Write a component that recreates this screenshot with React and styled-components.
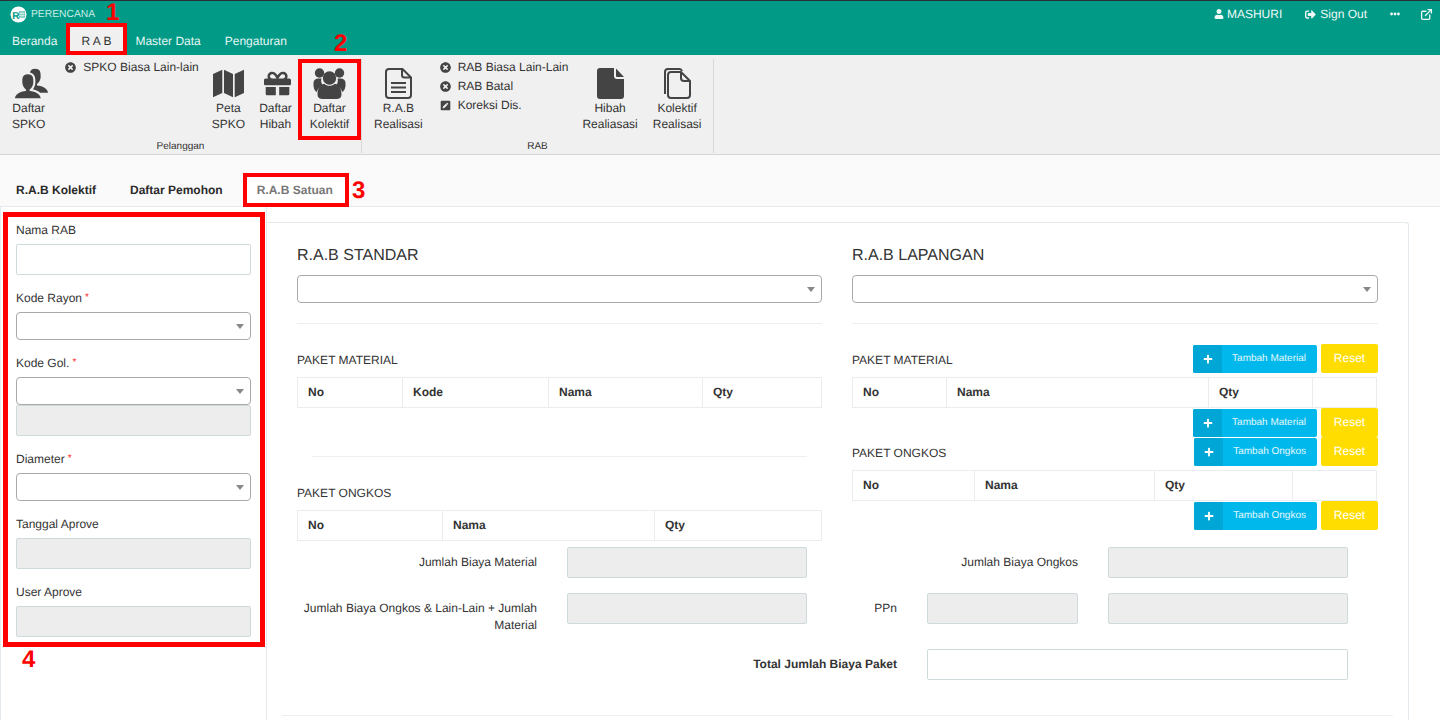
import React from 'react';
import styled, { createGlobalStyle } from 'styled-components';
import { FaUser, FaSignOutAlt, FaEllipsisH, FaTimesCircle, FaPenSquare, FaGift, FaPlus } from 'react-icons/fa';
import { ImUsers } from 'react-icons/im';
import { FiExternalLink } from 'react-icons/fi';

const Global = createGlobalStyle`
  html, body { margin: 0; padding: 0; background: #fff; overflow: hidden; }
  body { font-family: "Liberation Sans", Arial, sans-serif; font-size: 12px; line-height: 17px; color: #333; text-rendering: geometricPrecision; }
  * { box-sizing: border-box; }
`;

const Page = styled.div`position: relative; width: 1440px; height: 720px; overflow: hidden;`;

const Header = styled.header`
  height: 55px; background: #009a87; border-top: 1px solid #263238; color: #fff;
  display: flex; flex-direction: column;
`;
const TopRow = styled.div`height: 26px; display: flex; align-items: center; padding: 0 7px 0 10px;`;
const Brand = styled.div`display: flex; align-items: center; gap: 4px; font-size: 10.3px; color: #c9ece6;`;
const TopRight = styled.div`margin-left: auto; display: flex; align-items: center; gap: 23px;`;
const TopItem = styled.span`display: inline-flex; align-items: center; gap: ${p => p.$gap ?? 4}px; font-size: 12px; color: #eef9f7; margin-left: ${p => p.$ml ?? 0}px;`;
const NavRow = styled.nav`height: 28px; display: flex;`;
const NavTab = styled.a`
  padding: 0 12px; display: flex; align-items: center; font-size: 12px; height: 28px;
  color: ${p => (p.$active ? '#333' : '#e6f6f3')};
  background: ${p => (p.$active ? '#f0f0f0' : 'transparent')};
`;

const Ribbon = styled.section`height: 100px; background: #f0f0f0; border-bottom: 1px solid #d2d6d8; display: flex; padding-top: 4px;`;
const Group = styled.div`
  width: ${p => p.$w}px; height: 94px; border-right: 1px solid #d6d9da; padding-left: 5px;
  display: flex; flex-direction: column; flex: none;
`;
const GroupBody = styled.div`display: flex; height: 82px;`;
const GroupLabel = styled.div`font-size: 10px; line-height: 12px; text-align: center; color: #333; margin-left: -5px;`;
const BigButton = styled.div`
  padding: 7px 7px 0; display: flex; flex-direction: column; align-items: center;
  text-align: center; line-height: 16px; color: #333; white-space: nowrap; margin-right: ${p => p.$mr ?? 0}px;
`;
const IconBox = styled.div`height: 34px; display: flex; align-items: center; justify-content: center; color: #444; transform: translateX(${p => p.$shift ?? 0}px);`;
const SmallList = styled.div`margin: -1px ${p => p.$mr}px 0 ${p => p.$ml}px; display: flex; flex-direction: column;`;
const SmallItem = styled.div`height: 19px; display: flex; align-items: center; gap: 7px; white-space: nowrap; color: #333; svg { color: #444; flex: none; }`;

const TabBar = styled.div`height: 52px; background: #fafafa; display: flex; align-items: flex-end; border-bottom: 1px solid #e3e9ec;`;
const Tab = styled.div`
  height: 34px; padding: 1px ${p => p.$pad ?? 16}px 0; display: flex; align-items: center; font-weight: 700; font-size: 12px;
  margin: 0 ${p => p.$mr ?? 0}px -1px ${p => p.$ml ?? 0}px;
  color: ${p => (p.$active ? '#777' : '#2a2a2a')}; background: ${p => (p.$active ? '#fff' : 'transparent')};
`;

const Main = styled.main`display: flex; padding-right: 31px; border-left: 1px solid #e3e9ec; height: 513px;`;
const Sidebar = styled.aside`width: 266px; flex: none; border-right: 1px solid #e3e9ec; padding: 15px 15px 0 15px;`;
const Field = styled.div`margin-bottom: 15px;`;
const Label = styled.label`display: block; height: 17px; margin-bottom: 5px; line-height: 17px; color: #333;`;
const Req = styled.span`color: #f33; font-size: 10px; margin-left: 3px; line-height: 0; vertical-align: 2px;`;
const Input = styled.div`
  height: 31px; width: ${p => (p.$w ? `${p.$w}px` : '100%')}; flex: none; border: 1px solid #cfdadd; border-radius: 2px;
  background: ${p => (p.$disabled ? '#ededed' : '#fff')};
`;
const Select = styled.div`
  height: 28px; border: 1px solid #aaa; border-radius: 4px; background: #fff;
  display: flex; align-items: center; justify-content: flex-end; padding-right: 6px;
  &::after { content: ''; border-style: solid; border-width: 5px 4px 0; border-color: #888 transparent transparent; }
`;

const Panel = styled.div`
  flex: 1; margin-top: 15px; border-top: 1px solid #e3e9ec; border-right: 1px solid #e3e9ec; border-top-right-radius: 3px;
  padding: 21px 15px 0; display: flex; flex-direction: column;
`;
const Columns = styled.div`display: grid; grid-template-columns: 525px 526px; column-gap: 30px; padding: 0 15px;`;
const Col = styled.div`min-width: 0;`;
const Title = styled.h3`margin: 0 0 8px; padding-top: 1px; font-size: 16px; line-height: 22px; font-weight: 400; color: #333;`;
const Rule = styled.hr`
  margin: ${p => p.$mt}px ${p => p.$inset ?? 0}px ${p => p.$mb}px; border: 0; border-top: 1px solid #edf0f1; height: 1px;
`;
const SectionHead = styled.div`height: 29px; display: flex; align-items: center; justify-content: space-between; margin-bottom: 4px;`;
const SectionLabel = styled.div`color: #333; font-size: 12px; padding-top: ${p => p.$pt ?? 3}px; margin-bottom: ${p => p.$mb ?? 0}px;`;
const Actions = styled.div`height: 29px; display: flex; align-items: flex-end; justify-content: flex-end; gap: 4px;`;
const Add = styled.div`
  height: 28px; width: ${p => p.$w}px; display: flex; align-items: stretch; background: #00b8ec; border-radius: 2px; color: #e6f8fd; font-size: 10px;
`;
const AddIcon = styled.span`width: 29px; background: #00a6d6; display: flex; align-items: center; justify-content: center; color: #fff; padding-bottom: 1px; border-radius: 2px 0 0 2px;`;
const AddText = styled.span`flex: 1; display: flex; align-items: center; justify-content: flex-end; padding: 0 11px 1px 0;`;
const Reset = styled.div`height: 29px; width: 57px; background: #ffdd00; color: #fff; border-radius: 2px; display: flex; align-items: center; justify-content: center; font-size: 12px;`;
const Table = styled.table`width: ${p => p.$w ?? '100%'}; border-collapse: collapse; table-layout: fixed;`;
const Th = styled.th`
  width: ${p => (p.$w ? `${p.$w}px` : 'auto')}; height: 30px; padding: 0 10px; border: 1px solid #e9edef; text-align: left; font-size: 12px; font-weight: 700; color: #333;
`;
const FormGrid = styled(Columns)`margin-top: 6px;`;
const FormRow = styled.div`display: flex; column-gap: 30px; margin-bottom: ${p => p.$mb ?? 15}px;`;
const RowLabel = styled.div`
  width: ${p => p.$w}px; flex: none; text-align: right; padding-top: 7px; color: #333;
  font-weight: ${p => (p.$bold ? 700 : 400)};
`;
const TotalRow = styled(FormRow)`padding: 0 15px; margin: 0;`;

const Marker = styled.div`
  position: absolute; left: ${p => p.$x}px; top: ${p => p.$y}px; width: ${p => p.$w}px; height: ${p => p.$h}px;
  border: ${p => p.$b ?? 4}px solid #f00; pointer-events: none;
`;
const Num = styled.div`
  position: absolute; left: ${p => p.$x}px; top: ${p => p.$y}px; color: #f00; font-weight: 700; font-size: 24px; line-height: 24px;
`;
const FlippedUsers = styled(ImUsers)`transform: scaleX(-1);`;

const Logo = () => (
  <svg width="17" height="17" viewBox="0 0 17 17" aria-hidden="true">
    <circle cx="8.5" cy="8.5" r="8" fill="#fff" />
    <text x="2.2" y="12.500" fontSize="10" fontWeight="700" fontFamily="Liberation Sans" fill="#009a87">R</text>
    <rect x="9" y="5" width="6" height="7" rx="1" fill="#5fc0b4" />
    <path d="M9 7.3h6M9 9.6h6M11 5v7M13 5v7" stroke="#fff" strokeWidth=".6" />
  </svg>
);
const MapIcon = () => (
  <svg width="31" height="29" viewBox="0 0 31 29" aria-hidden="true">
    <path d="M0 5 9.300.8V24L0 28.200zM11 .8 20 5v23.200L11 24zM21.700 5 31 .8V24l-9.300 4.200z" fill="#444" />
  </svg>
);
const GroupIcon = () => (
  <svg width="33" height="31" viewBox="0 0 33 31" aria-hidden="true">
    <circle cx="6.500" cy="5" r="4.700" fill="#444" />
    <circle cx="26.500" cy="5" r="4.700" fill="#444" />
    <circle cx="16.500" cy="10" r="6.700" fill="#444" />
    <path d="M.5 15c0-3 2-4.500 5-4.500h3c-.8 2.500-.2 5 1.500 6.800C6.800 18.500 4.600 21 3.800 24 1.500 23 .2 19.500.5 15z" fill="#444" />
    <path d="M32.500 15c0-3-2-4.500-5-4.500h-3c.8 2.500.2 5-1.500 6.800 3.200 1.200 5.400 3.700 6.200 6.700 2.300-1 3.600-4.500 3.300-9z" fill="#444" />
    <path d="M4.500 26.500c0-6.500 2.700-9.800 6.800-10.700 2.800 2.700 7.600 2.700 10.400 0 4.100.9 6.800 4.200 6.800 10.700 0 3-2 4.500-5 4.500H9.500c-3 0-5-1.500-5-4.500z" fill="#444" />
  </svg>
);
const FileLines = () => (
  <svg width="27" height="31" viewBox="0 0 27 31" aria-hidden="true">
    <path d="M3.500 1h14L26 9.500V27a3 3 0 0 1-3 3H4a3 3 0 0 1-3-3V4a3 3 0 0 1 2.500-3z" fill="none" stroke="#444" strokeWidth="2" />
    <path d="M17 1v6a2.500 2.500 0 0 0 2.500 2.500H26" fill="none" stroke="#444" strokeWidth="2" />
    <path d="M6 15h15M6 19.500h15M6 24h15" stroke="#444" strokeWidth="2" />
  </svg>
);
const FileSolid = () => (
  <svg width="27" height="31" viewBox="0 0 27 31" aria-hidden="true">
    <path d="M3 0h14v8a3 3 0 0 0 3 3h7v17a3 3 0 0 1-3 3H3a3 3 0 0 1-3-3V3a3 3 0 0 1 3-3z" fill="#444" />
    <path d="M19 .5 27 9h-7a1 1 0 0 1-1-1z" fill="#444" />
  </svg>
);
const Files = () => (
  <svg width="28" height="31" viewBox="0 0 28 31" aria-hidden="true">
    <path d="M2 26V4a3 3 0 0 1 3-3h11a3 3 0 0 1 3 2" fill="none" stroke="#444" strokeWidth="2" />
    <path d="M8 4h10l9 9v14a3 3 0 0 1-3 3H8a3 3 0 0 1-3-3V7a3 3 0 0 1 3-3z" fill="#f0f0f0" stroke="#444" strokeWidth="2" />
    <path d="M18 4v6a3 3 0 0 0 3 3h6" fill="none" stroke="#444" strokeWidth="2" />
  </svg>
);

const Big = ({ icon, lines, mr, shift }) => (
  <BigButton $mr={mr}>
    <IconBox $shift={shift}>{icon}</IconBox>
    <span>{lines[0]}<br />{lines[1]}</span>
  </BigButton>
);
const Small = ({ children, pen }) => (
  <SmallItem>{pen ? <FaPenSquare size={11} /> : <FaTimesCircle size={11} />}{children}</SmallItem>
);
const AddButton = ({ w, children }) => (
  <Add $w={w}><AddIcon><FaPlus size={10} /></AddIcon><AddText>{children}</AddText></Add>
);
const Form = ({ label, req, children }) => (
  <Field>
    <Label>{label}{req && <Req>*</Req>}</Label>
    {children}
  </Field>
);

export default function App() {
  return (
    <Page>
      <Global />
      <Header>
        <TopRow>
          <Brand><Logo />PERENCANA</Brand>
          <TopRight>
            <TopItem $gap={3}><FaUser size={10} />MASHURI</TopItem>
            <TopItem $gap={4}><FaSignOutAlt size={11} />Sign Out</TopItem>
            <TopItem><FaEllipsisH size={10} /></TopItem>
            <TopItem $ml={-3}><FiExternalLink size={13} strokeWidth={2.5} /></TopItem>
          </TopRight>
        </TopRow>
        <NavRow>
          <NavTab>Beranda</NavTab>
          <NavTab $active>R A B</NavTab>
          <NavTab>Master Data</NavTab>
          <NavTab>Pengaturan</NavTab>
        </NavRow>
      </Header>

      <Ribbon>
        <Group $w={362}>
          <GroupBody>
            <Big icon={<FlippedUsers size={33} />} lines={['Daftar', 'SPKO']} shift={3} />
            <SmallList $ml={13} $mr={6}><Small>SPKO Biasa Lain-lain</Small></SmallList>
            <Big icon={<MapIcon />} lines={['Peta', 'SPKO']} />
            <Big icon={<FaGift size={27} />} lines={['Daftar', 'Hibah']} mr={4} shift={2} />
            <Big icon={<GroupIcon />} lines={['Daftar', 'Kolektif']} />
          </GroupBody>
          <GroupLabel>Pelanggan</GroupLabel>
        </Group>
        <Group $w={352}>
          <GroupBody>
            <Big icon={<FileLines />} lines={['R.A.B', 'Realisasi']} />
            <SmallList $ml={10} $mr={7}>
              <Small>RAB Biasa Lain-Lain</Small>
              <Small>RAB Batal</Small>
              <Small pen>Koreksi Dis.</Small>
            </SmallList>
            <Big icon={<FileSolid />} lines={['Hibah', 'Realiasasi']} mr={1} />
            <Big icon={<Files />} lines={['Kolektif', 'Realisasi']} />
          </GroupBody>
          <GroupLabel>RAB</GroupLabel>
        </Group>
      </Ribbon>

      <TabBar>
        <Tab>R.A.B Kolektif</Tab>
        <Tab $ml={2} $mr={6}>Daftar Pemohon</Tab>
        <Tab $active $pad={12}>R.A.B Satuan</Tab>
      </TabBar>

      <Main>
        <Sidebar>
          <Form label="Nama RAB"><Input /></Form>
          <Form label="Kode Rayon" req><Select /></Form>
          <Form label="Kode Gol." req><Select /><Input $disabled /></Form>
          <Form label="Diameter" req><Select /></Form>
          <Form label="Tanggal Aprove"><Input $disabled /></Form>
          <Form label="User Aprove"><Input $disabled /></Form>
        </Sidebar>

        <Panel>
          <Columns>
            <Col>
              <Title>R.A.B STANDAR</Title>
              <Select />
              <Rule $mt={20} $mb={20} />
              <SectionHead><SectionLabel>PAKET MATERIAL</SectionLabel></SectionHead>
              <Table>
                <thead><tr><Th $w={105}>No</Th><Th $w={146}>Kode</Th><Th $w={154}>Nama</Th><Th>Qty</Th></tr></thead>
              </Table>
              <Rule $mt={48} $mb={28} $inset={15} />
              <SectionLabel $pt={0} $mb={8}>PAKET ONGKOS</SectionLabel>
              <Table>
                <thead><tr><Th $w={145}>No</Th><Th $w={212}>Nama</Th><Th>Qty</Th></tr></thead>
              </Table>
            </Col>
            <Col>
              <Title>R.A.B LAPANGAN</Title>
              <Select />
              <Rule $mt={20} $mb={20} />
              <SectionHead>
                <SectionLabel>PAKET MATERIAL</SectionLabel>
                <Actions><AddButton w={124}>Tambah Material</AddButton><Reset>Reset</Reset></Actions>
              </SectionHead>
              <Table $w="525px">
                <thead><tr><Th $w={94}>No</Th><Th $w={262}>Nama</Th><Th $w={104}>Qty</Th><Th /></tr></thead>
              </Table>
              <Actions><AddButton w={124}>Tambah Material</AddButton><Reset>Reset</Reset></Actions>
              <SectionHead>
                <SectionLabel>PAKET ONGKOS</SectionLabel>
                <Actions><AddButton w={123}>Tambah Ongkos</AddButton><Reset>Reset</Reset></Actions>
              </SectionHead>
              <Table $w="525px">
                <thead><tr><Th $w={122}>No</Th><Th $w={180}>Nama</Th><Th $w={138}>Qty</Th><Th /></tr></thead>
              </Table>
              <Actions><AddButton w={123}>Tambah Ongkos</AddButton><Reset>Reset</Reset></Actions>
            </Col>
          </Columns>

          <FormGrid>
            <Col>
              <FormRow><RowLabel $w={240}>Jumlah Biaya Material</RowLabel><Input $disabled $w={240} /></FormRow>
              <FormRow><RowLabel $w={240}>Jumlah Biaya Ongkos &amp; Lain-Lain + Jumlah Material</RowLabel><Input $disabled $w={240} /></FormRow>
            </Col>
            <Col>
              <FormRow><RowLabel $w={226}>Jumlah Biaya Ongkos</RowLabel><Input $disabled $w={240} /></FormRow>
              <FormRow><RowLabel $w={45}>PPn</RowLabel><Input $disabled $w={151} /><Input $disabled $w={240} /></FormRow>
            </Col>
          </FormGrid>
          <TotalRow>
            <RowLabel $w={600} $bold>Total Jumlah Biaya Paket</RowLabel>
            <Input $w={421} />
          </TotalRow>
          <Rule $mt={35} $mb={0} />
        </Panel>
      </Main>

      <Marker $x={66} $y={23} $w={61} $h={32} />
      <Marker $x={298} $y={59} $w={63} $h={81} />
      <Marker $x={243} $y={173} $w={106} $h={34} />
      <Marker $x={3} $y={212} $w={262} $h={435} $b={5} />
      <Num $x={106} $y={1}>1</Num>
      <Num $x={334} $y={32}>2</Num>
      <Num $x={352} $y={179}>3</Num>
      <Num $x={22} $y={648}>4</Num>
    </Page>
  );
}
